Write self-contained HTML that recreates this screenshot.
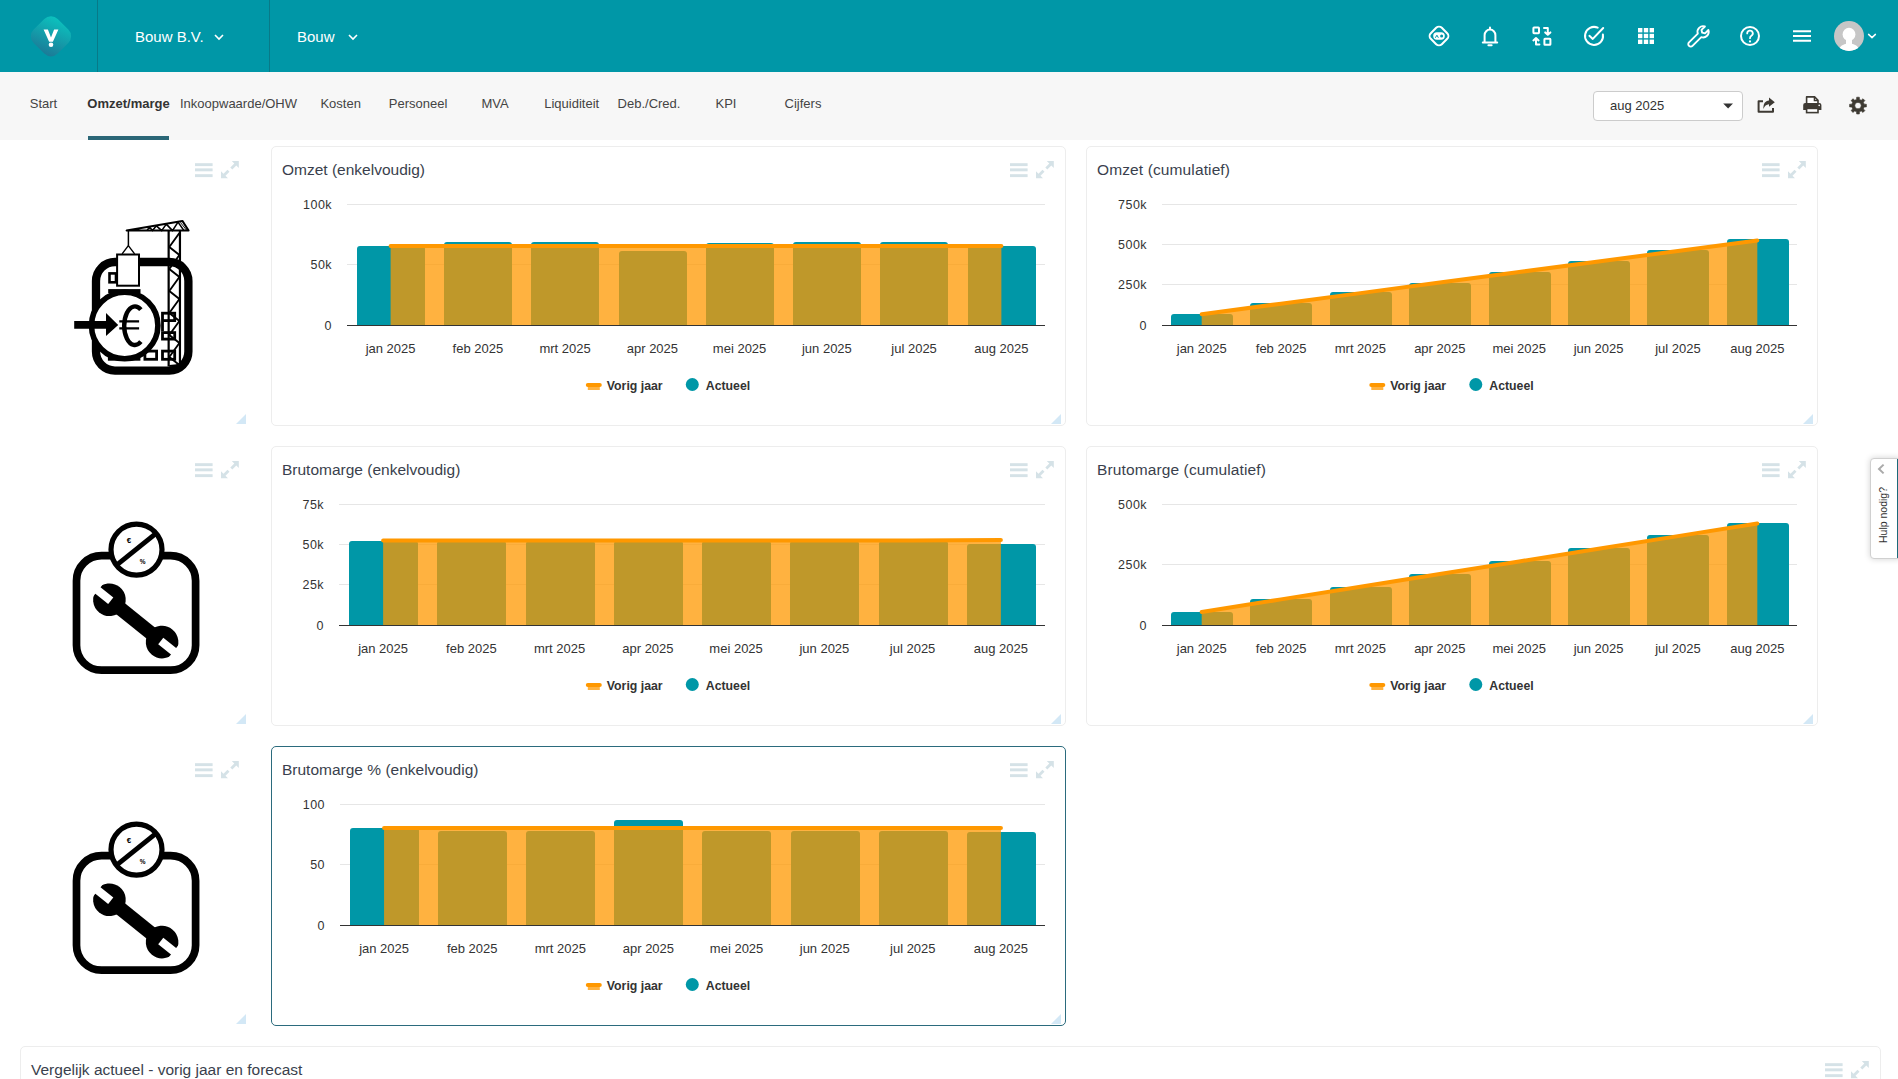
<!DOCTYPE html>
<html><head><meta charset="utf-8"><title>Dashboard</title>
<style>
html,body{margin:0;padding:0;overflow:hidden}
body{width:1898px;height:1079px;overflow:hidden;position:relative;background:#fff;font-family:"Liberation Sans", sans-serif;color:#333}
.abs{position:absolute}
.hdr{left:0;top:0;width:1898px;height:72px;background:#0097a7}
.nav{left:0;top:72px;width:1898px;height:68px;background:#f7f7f7}
.tab{position:absolute;top:96px;font-size:13px;line-height:15px;color:#444;white-space:nowrap;transform:translateX(-50%)}
.card{position:absolute;box-sizing:border-box;border:1px solid #ededed;border-radius:5px;background:#fff}
.title{position:absolute;font-size:15.5px;line-height:18px;color:#3a3f4d;white-space:nowrap}
svg text{font-family:"Liberation Sans", sans-serif}
.yl{font-size:12.5px;fill:#333;letter-spacing:0.45px}
.xl{font-size:13px;fill:#333}
.lg{font-size:12.3px;font-weight:bold;fill:#333}
.hw{position:absolute;color:#fff;font-size:15px;line-height:20px;white-space:nowrap}
#root{position:absolute;left:0;top:0;width:1898px;height:1079px;overflow:hidden}
</style></head><body><div id="root">

<div class="abs hdr"></div>
<div class="abs" style="left:97px;top:0;width:1px;height:72px;background:#087a88"></div>
<div class="abs" style="left:269px;top:0;width:1px;height:72px;background:#087a88"></div>
<svg class="abs" style="left:26px;top:11px" width="50" height="50" viewBox="0 0 50 50">
<defs><linearGradient id="lg1" x1="0.3" y1="0" x2="0.7" y2="1"><stop offset="0" stop-color="#0cc0bd"/><stop offset="1" stop-color="#1b7c98"/></linearGradient></defs>
<rect x="8" y="8.3" width="34" height="34" rx="9.5" fill="url(#lg1)" transform="rotate(45 25 25.3)"/>
<path d="M17.6,18.4 h4.3 l3.1,8 l3.1,-8 h4.3 l-5.5,12.4 h-3.8 z" fill="#fff"/>
<circle cx="25" cy="33.8" r="2.3" fill="#fff"/></svg>
<div class="hw" style="left:135px;top:27px">Bouw B.V.</div>
<svg class="abs" style="left:213px;top:32.5px" width="12" height="8"><path d="M2,2 L6,6 L10,2" fill="none" stroke="#fff" stroke-width="1.6"/></svg>
<div class="hw" style="left:297px;top:27px">Bouw</div>
<svg class="abs" style="left:347px;top:32.5px" width="12" height="8"><path d="M2,2 L6,6 L10,2" fill="none" stroke="#fff" stroke-width="1.6"/></svg>
<svg class="abs" style="left:1420px;top:16px" width="470" height="40" viewBox="1420 16 470 40" fill="none" stroke="#fff" stroke-width="2" stroke-linecap="round" stroke-linejoin="round">
<!-- robot diamond -->
<rect x="1431.2" y="28.2" width="15.6" height="15.6" rx="4" transform="rotate(45 1439 36)"/>
<rect x="1433.2" y="32.3" width="11.6" height="7.4" rx="3.7" fill="#fff" stroke="none"/>
<path d="M1435.6,37.4 l1.3,-2.2 l1.3,2.2" stroke="#0097a7" stroke-width="1"/>
<circle cx="1441.6" cy="36" r="1.5" fill="#0097a7" stroke="none"/>
<!-- bell -->
<path d="M1482.8,42.6 h14.4 M1484.6,42.4 V35.2 a5.4,5.6 0 0 1 10.8,0 V42.4 M1490,29.4 V27.6" />
<path d="M1488.4,45.2 h3.2" />
<!-- swap -->
<rect x="1533.4" y="27.6" width="5.6" height="5.6" rx="0.6"/>
<rect x="1544.4" y="38.8" width="6" height="6" rx="0.6"/>
<path d="M1544,28 h3.8 v6 M1545.2,32.4 l2.6,2.4 l2.6,-2.4"/>
<path d="M1539.4,44.4 h-3.4 v-6 M1533.4,40.4 l2.6,-2.4 l2.6,2.4"/>
<!-- check circle -->
<path d="M1602.9,34.4 a9,9 0 1 1 -5.2,-6.7"/>
<path d="M1589.4,35.8 l3.4,3.1 l10.4,-10.9"/>
<!-- grid -->
<g fill="#fff" stroke="none">
<rect x="1638" y="28" width="4.4" height="4.4"/><rect x="1643.8" y="28" width="4.4" height="4.4"/><rect x="1649.6" y="28" width="4.4" height="4.4"/>
<rect x="1638" y="33.8" width="4.4" height="4.4"/><rect x="1643.8" y="33.8" width="4.4" height="4.4"/><rect x="1649.6" y="33.8" width="4.4" height="4.4"/>
<rect x="1638" y="39.6" width="4.4" height="4.4"/><rect x="1643.8" y="39.6" width="4.4" height="4.4"/><rect x="1649.6" y="39.6" width="4.4" height="4.4"/>
</g>
<!-- wrench -->
<path d="M1689,42.4 l8.8,-8.8 a5.6,5.6 0 0 1 7.1,-7.1 l-3.4,3.4 l0.7,2.8 l2.8,0.7 l3.4,-3.4 a5.6,5.6 0 0 1 -7.1,7.1 l-8.8,8.8 a1.9,1.9 0 0 1 -3.5,-3.5 z" stroke-width="1.9"/>
<!-- help -->
<circle cx="1750" cy="36" r="9"/>
<path d="M1747.2,33.4 a2.8,2.8 0 1 1 4.2,2.4 c-1,0.6 -1.4,1.2 -1.4,2.4" stroke-width="1.8"/>
<circle cx="1750" cy="41.4" r="1.1" fill="#fff" stroke="none"/>
<!-- hamburger -->
<path d="M1793,31.2 h18 M1793,36 h18 M1793,40.8 h18" stroke-linecap="butt"/>
<!-- avatar -->
<defs><clipPath id="avc"><circle cx="1849" cy="36" r="15"/></clipPath></defs>
<circle cx="1849" cy="36" r="15" fill="#c6c6c6" stroke="none"/>
<g clip-path="url(#avc)" fill="#fff" stroke="none"><ellipse cx="1849" cy="34.4" rx="6.4" ry="6.6"/><rect x="1846" y="38" width="6" height="7"/><ellipse cx="1849" cy="50.4" rx="10.2" ry="6.8"/></g>
<path d="M1868.6,34.4 l3.4,3.2 l3.4,-3.2" stroke-width="1.5"/>
</svg>
<div class="abs nav"></div>
<div class="tab" style="left:43.5px;">Start</div>
<div class="tab" style="left:128.5px;font-weight:bold;color:#333;">Omzet/marge</div>
<div class="tab" style="left:238.5px;">Inkoopwaarde/OHW</div>
<div class="tab" style="left:340.7px;">Kosten</div>
<div class="tab" style="left:418px;">Personeel</div>
<div class="tab" style="left:495px;">MVA</div>
<div class="tab" style="left:571.7px;">Liquiditeit</div>
<div class="tab" style="left:649px;">Deb./Cred.</div>
<div class="tab" style="left:726px;">KPI</div>
<div class="tab" style="left:803px;">Cijfers</div>
<div class="abs" style="left:88px;top:136px;width:81px;height:4px;background:#2b6777"></div>
<div class="abs" style="left:1593px;top:91px;width:150px;height:30px;box-sizing:border-box;border:1px solid #ccc;border-radius:4px;background:#fff"></div>
<div class="abs" style="left:1610px;top:98px;font-size:13px;line-height:15px;color:#333">aug 2025</div>
<svg class="abs" style="left:1720px;top:100px" width="16" height="12"><path d="M3.2,3.5 h9.8 l-4.9,5 z" fill="#333"/></svg>
<svg class="abs" style="left:1750px;top:90px" width="125" height="30" viewBox="1750 90 125 30">
<!-- share -->
<path d="M1763,101.2 h-4.4 v10.5 h14.4 v-3.8" fill="none" stroke="#3e3a33" stroke-width="2" stroke-linejoin="round" stroke-linecap="butt"/>
<path d="M1774.8,102.2 L1769,97.6 V100.4 C1765.2,100.6 1763.2,103.6 1763.4,109 C1764.6,105.8 1766.2,104.4 1769,104.2 V106.8 Z" fill="#3e3a33"/>
<!-- print -->
<path d="M1806.6,103.6 V96.9 h8 l3.4,3.4 V103.6" fill="#fff" stroke="#3e3a33" stroke-width="1.6" stroke-linejoin="round"/>
<path d="M1814.4,96.9 v3.6 h3.6" fill="none" stroke="#3e3a33" stroke-width="1.4"/>
<path d="M1803.2,110 V105 a2,2 0 0 1 2,-2 h14.2 a2,2 0 0 1 2,2 V110 Z" fill="#3e3a33"/>
<rect x="1806.6" y="108.4" width="11.4" height="4.2" fill="#fff" stroke="#3e3a33" stroke-width="1.6"/>
<circle cx="1819.2" cy="105.4" r="0.8" fill="#fff"/>
<!-- gear -->
<path d="M1856.53,99.47 L1856.67,97.20 L1859.33,97.20 L1859.47,99.47 L1861.29,100.23 L1863.00,98.72 L1864.88,100.60 L1863.37,102.31 L1864.13,104.13 L1866.40,104.27 L1866.40,106.93 L1864.13,107.07 L1863.37,108.89 L1864.88,110.60 L1863.00,112.48 L1861.29,110.97 L1859.47,111.73 L1859.33,114.00 L1856.67,114.00 L1856.53,111.73 L1854.71,110.97 L1853.00,112.48 L1851.12,110.60 L1852.63,108.89 L1851.87,107.07 L1849.60,106.93 L1849.60,104.27 L1851.87,104.13 L1852.63,102.31 L1851.12,100.60 L1853.00,98.72 L1854.71,100.23 Z M1861.20,105.60 a3.2,3.2 0 1 0 -6.40,0 a3.2,3.2 0 1 0 6.40,0 Z" fill="#3e3a33" fill-rule="evenodd" stroke="#3e3a33" stroke-width="0.6" stroke-linejoin="round"/>
</svg>
<div class="card" style="left:271px;top:146px;width:795px;height:280px;"></div>
<div class="title" style="left:282px;top:161px;">Omzet (enkelvoudig)</div>
<svg class="abs" style="left:1009.3px;top:161px" width="46" height="20" viewBox="0 0 46 20">
<g fill="#d5e2e7"><rect x="1" y="2.2" width="17.6" height="2.9"/><rect x="1" y="7.4" width="17.6" height="2.9"/><rect x="1" y="13.2" width="17.6" height="2.9"/>
<path d="M44.8,0 V7 L42.3,4.5 L38.3,8.5 L36.3,6.5 L40.3,2.5 L37.8,0 Z"/>
<path d="M27,17.2 V10.2 L29.5,12.7 L33.5,8.7 L35.5,10.7 L31.5,14.7 L34,17.2 Z"/></g></svg>
<svg class="abs" style="left:1051px;top:414px" width="10" height="10"><path d="M10,0 V10 H0 Z" fill="#d3e8f6"/></svg>
<div class="card" style="left:1086px;top:146px;width:732px;height:280px;"></div>
<div class="title" style="left:1097px;top:161px;letter-spacing:0.12px;">Omzet (cumulatief)</div>
<svg class="abs" style="left:1761.3px;top:161px" width="46" height="20" viewBox="0 0 46 20">
<g fill="#d5e2e7"><rect x="1" y="2.2" width="17.6" height="2.9"/><rect x="1" y="7.4" width="17.6" height="2.9"/><rect x="1" y="13.2" width="17.6" height="2.9"/>
<path d="M44.8,0 V7 L42.3,4.5 L38.3,8.5 L36.3,6.5 L40.3,2.5 L37.8,0 Z"/>
<path d="M27,17.2 V10.2 L29.5,12.7 L33.5,8.7 L35.5,10.7 L31.5,14.7 L34,17.2 Z"/></g></svg>
<svg class="abs" style="left:1803px;top:414px" width="10" height="10"><path d="M10,0 V10 H0 Z" fill="#d3e8f6"/></svg>
<div class="card" style="left:271px;top:446px;width:795px;height:280px;"></div>
<div class="title" style="left:282px;top:461px;">Brutomarge (enkelvoudig)</div>
<svg class="abs" style="left:1009.3px;top:461px" width="46" height="20" viewBox="0 0 46 20">
<g fill="#d5e2e7"><rect x="1" y="2.2" width="17.6" height="2.9"/><rect x="1" y="7.4" width="17.6" height="2.9"/><rect x="1" y="13.2" width="17.6" height="2.9"/>
<path d="M44.8,0 V7 L42.3,4.5 L38.3,8.5 L36.3,6.5 L40.3,2.5 L37.8,0 Z"/>
<path d="M27,17.2 V10.2 L29.5,12.7 L33.5,8.7 L35.5,10.7 L31.5,14.7 L34,17.2 Z"/></g></svg>
<svg class="abs" style="left:1051px;top:714px" width="10" height="10"><path d="M10,0 V10 H0 Z" fill="#d3e8f6"/></svg>
<div class="card" style="left:1086px;top:446px;width:732px;height:280px;"></div>
<div class="title" style="left:1097px;top:461px;letter-spacing:0.12px;">Brutomarge (cumulatief)</div>
<svg class="abs" style="left:1761.3px;top:461px" width="46" height="20" viewBox="0 0 46 20">
<g fill="#d5e2e7"><rect x="1" y="2.2" width="17.6" height="2.9"/><rect x="1" y="7.4" width="17.6" height="2.9"/><rect x="1" y="13.2" width="17.6" height="2.9"/>
<path d="M44.8,0 V7 L42.3,4.5 L38.3,8.5 L36.3,6.5 L40.3,2.5 L37.8,0 Z"/>
<path d="M27,17.2 V10.2 L29.5,12.7 L33.5,8.7 L35.5,10.7 L31.5,14.7 L34,17.2 Z"/></g></svg>
<svg class="abs" style="left:1803px;top:714px" width="10" height="10"><path d="M10,0 V10 H0 Z" fill="#d3e8f6"/></svg>
<div class="card" style="left:271px;top:746px;width:795px;height:280px;border-color:#2b6b7d;"></div>
<div class="title" style="left:282px;top:761px;">Brutomarge % (enkelvoudig)</div>
<svg class="abs" style="left:1009.3px;top:761px" width="46" height="20" viewBox="0 0 46 20">
<g fill="#d5e2e7"><rect x="1" y="2.2" width="17.6" height="2.9"/><rect x="1" y="7.4" width="17.6" height="2.9"/><rect x="1" y="13.2" width="17.6" height="2.9"/>
<path d="M44.8,0 V7 L42.3,4.5 L38.3,8.5 L36.3,6.5 L40.3,2.5 L37.8,0 Z"/>
<path d="M27,17.2 V10.2 L29.5,12.7 L33.5,8.7 L35.5,10.7 L31.5,14.7 L34,17.2 Z"/></g></svg>
<svg class="abs" style="left:1051px;top:1014px" width="10" height="10"><path d="M10,0 V10 H0 Z" fill="#d3e8f6"/></svg>
<svg class="abs" style="left:194.3px;top:161px" width="46" height="20" viewBox="0 0 46 20">
<g fill="#d5e2e7"><rect x="1" y="2.2" width="17.6" height="2.9"/><rect x="1" y="7.4" width="17.6" height="2.9"/><rect x="1" y="13.2" width="17.6" height="2.9"/>
<path d="M44.8,0 V7 L42.3,4.5 L38.3,8.5 L36.3,6.5 L40.3,2.5 L37.8,0 Z"/>
<path d="M27,17.2 V10.2 L29.5,12.7 L33.5,8.7 L35.5,10.7 L31.5,14.7 L34,17.2 Z"/></g></svg>
<svg class="abs" style="left:235.5px;top:414px" width="10" height="10"><path d="M10,0 V10 H0 Z" fill="#d3e8f6"/></svg>
<svg class="abs" style="left:194.3px;top:461px" width="46" height="20" viewBox="0 0 46 20">
<g fill="#d5e2e7"><rect x="1" y="2.2" width="17.6" height="2.9"/><rect x="1" y="7.4" width="17.6" height="2.9"/><rect x="1" y="13.2" width="17.6" height="2.9"/>
<path d="M44.8,0 V7 L42.3,4.5 L38.3,8.5 L36.3,6.5 L40.3,2.5 L37.8,0 Z"/>
<path d="M27,17.2 V10.2 L29.5,12.7 L33.5,8.7 L35.5,10.7 L31.5,14.7 L34,17.2 Z"/></g></svg>
<svg class="abs" style="left:235.5px;top:714px" width="10" height="10"><path d="M10,0 V10 H0 Z" fill="#d3e8f6"/></svg>
<svg class="abs" style="left:194.3px;top:761px" width="46" height="20" viewBox="0 0 46 20">
<g fill="#d5e2e7"><rect x="1" y="2.2" width="17.6" height="2.9"/><rect x="1" y="7.4" width="17.6" height="2.9"/><rect x="1" y="13.2" width="17.6" height="2.9"/>
<path d="M44.8,0 V7 L42.3,4.5 L38.3,8.5 L36.3,6.5 L40.3,2.5 L37.8,0 Z"/>
<path d="M27,17.2 V10.2 L29.5,12.7 L33.5,8.7 L35.5,10.7 L31.5,14.7 L34,17.2 Z"/></g></svg>
<svg class="abs" style="left:235.5px;top:1014px" width="10" height="10"><path d="M10,0 V10 H0 Z" fill="#d3e8f6"/></svg>
<div class="card" style="left:20px;top:1046px;width:1861px;height:60px"></div>
<div class="title" style="left:31px;top:1061px">Vergelijk actueel - vorig jaar en forecast</div>
<svg class="abs" style="left:1824.4px;top:1061px" width="46" height="20" viewBox="0 0 46 20">
<g fill="#d5e2e7"><rect x="1" y="2.2" width="17.6" height="2.9"/><rect x="1" y="7.4" width="17.6" height="2.9"/><rect x="1" y="13.2" width="17.6" height="2.9"/>
<path d="M44.8,0 V7 L42.3,4.5 L38.3,8.5 L36.3,6.5 L40.3,2.5 L37.8,0 Z"/>
<path d="M27,17.2 V10.2 L29.5,12.7 L33.5,8.7 L35.5,10.7 L31.5,14.7 L34,17.2 Z"/></g></svg>
<svg class="abs" style="left:271px;top:146px" width="795" height="280" viewBox="0 0 795 280"><rect x="76" y="58" width="698" height="1" fill="#e6e6e6"/>
<rect x="76" y="118" width="698" height="1" fill="#e6e6e6"/>
<path d="M86,179 V103 a3,3 0 0 1 3,-3 H151 a3,3 0 0 1 3,3 V179 Z" fill="#0097a7"/>
<path d="M173,179 V99 a3,3 0 0 1 3,-3 H238 a3,3 0 0 1 3,3 V179 Z" fill="#0097a7"/>
<path d="M260,179 V99 a3,3 0 0 1 3,-3 H325 a3,3 0 0 1 3,3 V179 Z" fill="#0097a7"/>
<path d="M348,179 V108 a3,3 0 0 1 3,-3 H413 a3,3 0 0 1 3,3 V179 Z" fill="#0097a7"/>
<path d="M435,179 V100 a3,3 0 0 1 3,-3 H500 a3,3 0 0 1 3,3 V179 Z" fill="#0097a7"/>
<path d="M522,179 V99 a3,3 0 0 1 3,-3 H587 a3,3 0 0 1 3,3 V179 Z" fill="#0097a7"/>
<path d="M609,179 V99 a3,3 0 0 1 3,-3 H674 a3,3 0 0 1 3,3 V179 Z" fill="#0097a7"/>
<path d="M697,179 V103 a3,3 0 0 1 3,-3 H762 a3,3 0 0 1 3,3 V179 Z" fill="#0097a7"/>
<path d="M119.62,100.00 L206.88,100.00 L294.12,100.00 L381.38,100.00 L468.62,100.00 L555.88,100.00 L643.12,100.00 L730.38,100.00 L730.38,179 L119.62,179 Z" fill="#ff9800" fill-opacity="0.75"/>
<path d="M119.62,100.00 L206.88,100.00 L294.12,100.00 L381.38,100.00 L468.62,100.00 L555.88,100.00 L643.12,100.00 L730.38,100.00" fill="none" stroke="#ff9800" stroke-width="4" stroke-linecap="round" stroke-linejoin="round"/>
<rect x="76" y="179" width="698" height="1" fill="#333"/>
<text x="61" y="62.5" text-anchor="end" class="yl">100k</text>
<text x="61" y="122.5" text-anchor="end" class="yl">50k</text>
<text x="61" y="184.2" text-anchor="end" class="yl">0</text>
<text x="119.6" y="207" text-anchor="middle" class="xl">jan 2025</text>
<text x="206.9" y="207" text-anchor="middle" class="xl">feb 2025</text>
<text x="294.1" y="207" text-anchor="middle" class="xl">mrt 2025</text>
<text x="381.4" y="207" text-anchor="middle" class="xl">apr 2025</text>
<text x="468.6" y="207" text-anchor="middle" class="xl">mei 2025</text>
<text x="555.9" y="207" text-anchor="middle" class="xl">jun 2025</text>
<text x="643.1" y="207" text-anchor="middle" class="xl">jul 2025</text>
<text x="730.4" y="207" text-anchor="middle" class="xl">aug 2025</text>
<rect x="316.8" y="240" width="12" height="4" fill="#ff9800" fill-opacity="0.75"/>
<path d="M316.8,239 h12" stroke="#ff9800" stroke-width="4" stroke-linecap="round"/>
<text x="335.8" y="243.5" class="lg">Vorig jaar</text>
<circle cx="421.3" cy="238.5" r="6.5" fill="#0097a7"/>
<text x="434.8" y="243.5" class="lg">Actueel</text></svg>
<svg class="abs" style="left:1086px;top:146px" width="732" height="280" viewBox="0 0 732 280"><rect x="76" y="58" width="635" height="1" fill="#e6e6e6"/>
<rect x="76" y="98" width="635" height="1" fill="#e6e6e6"/>
<rect x="76" y="138" width="635" height="1" fill="#e6e6e6"/>
<path d="M85,179 V171 a3,3 0 0 1 3,-3 H144 a3,3 0 0 1 3,3 V179 Z" fill="#0097a7"/>
<path d="M164,179 V160 a3,3 0 0 1 3,-3 H223 a3,3 0 0 1 3,3 V179 Z" fill="#0097a7"/>
<path d="M244,179 V149 a3,3 0 0 1 3,-3 H303 a3,3 0 0 1 3,3 V179 Z" fill="#0097a7"/>
<path d="M323,179 V140 a3,3 0 0 1 3,-3 H382 a3,3 0 0 1 3,3 V179 Z" fill="#0097a7"/>
<path d="M403,179 V129 a3,3 0 0 1 3,-3 H462 a3,3 0 0 1 3,3 V179 Z" fill="#0097a7"/>
<path d="M482,179 V118 a3,3 0 0 1 3,-3 H541 a3,3 0 0 1 3,3 V179 Z" fill="#0097a7"/>
<path d="M561,179 V107 a3,3 0 0 1 3,-3 H620 a3,3 0 0 1 3,3 V179 Z" fill="#0097a7"/>
<path d="M641,179 V96 a3,3 0 0 1 3,-3 H700 a3,3 0 0 1 3,3 V179 Z" fill="#0097a7"/>
<path d="M115.69,168.20 L195.06,157.66 L274.44,147.11 L353.81,136.57 L433.19,126.03 L512.56,115.49 L591.94,104.94 L671.31,94.40 L671.31,179 L115.69,179 Z" fill="#ff9800" fill-opacity="0.75"/>
<path d="M115.69,168.20 L195.06,157.66 L274.44,147.11 L353.81,136.57 L433.19,126.03 L512.56,115.49 L591.94,104.94 L671.31,94.40" fill="none" stroke="#ff9800" stroke-width="4" stroke-linecap="round" stroke-linejoin="round"/>
<rect x="76" y="179" width="635" height="1" fill="#333"/>
<text x="61" y="62.5" text-anchor="end" class="yl">750k</text>
<text x="61" y="102.5" text-anchor="end" class="yl">500k</text>
<text x="61" y="142.5" text-anchor="end" class="yl">250k</text>
<text x="61" y="184.2" text-anchor="end" class="yl">0</text>
<text x="115.7" y="207" text-anchor="middle" class="xl">jan 2025</text>
<text x="195.1" y="207" text-anchor="middle" class="xl">feb 2025</text>
<text x="274.4" y="207" text-anchor="middle" class="xl">mrt 2025</text>
<text x="353.8" y="207" text-anchor="middle" class="xl">apr 2025</text>
<text x="433.2" y="207" text-anchor="middle" class="xl">mei 2025</text>
<text x="512.6" y="207" text-anchor="middle" class="xl">jun 2025</text>
<text x="591.9" y="207" text-anchor="middle" class="xl">jul 2025</text>
<text x="671.3" y="207" text-anchor="middle" class="xl">aug 2025</text>
<rect x="285.3" y="240" width="12" height="4" fill="#ff9800" fill-opacity="0.75"/>
<path d="M285.3,239 h12" stroke="#ff9800" stroke-width="4" stroke-linecap="round"/>
<text x="304.3" y="243.5" class="lg">Vorig jaar</text>
<circle cx="389.8" cy="238.5" r="6.5" fill="#0097a7"/>
<text x="403.3" y="243.5" class="lg">Actueel</text></svg>
<svg class="abs" style="left:271px;top:446px" width="795" height="280" viewBox="0 0 795 280"><rect x="68" y="58" width="706" height="1" fill="#e6e6e6"/>
<rect x="68" y="98" width="706" height="1" fill="#e6e6e6"/>
<rect x="68" y="138" width="706" height="1" fill="#e6e6e6"/>
<path d="M78,179 V98 a3,3 0 0 1 3,-3 H144 a3,3 0 0 1 3,3 V179 Z" fill="#0097a7"/>
<path d="M166,179 V98 a3,3 0 0 1 3,-3 H232 a3,3 0 0 1 3,3 V179 Z" fill="#0097a7"/>
<path d="M255,179 V98 a3,3 0 0 1 3,-3 H321 a3,3 0 0 1 3,3 V179 Z" fill="#0097a7"/>
<path d="M343,179 V98 a3,3 0 0 1 3,-3 H409 a3,3 0 0 1 3,3 V179 Z" fill="#0097a7"/>
<path d="M431,179 V98 a3,3 0 0 1 3,-3 H497 a3,3 0 0 1 3,3 V179 Z" fill="#0097a7"/>
<path d="M519,179 V98 a3,3 0 0 1 3,-3 H585 a3,3 0 0 1 3,3 V179 Z" fill="#0097a7"/>
<path d="M608,179 V98 a3,3 0 0 1 3,-3 H674 a3,3 0 0 1 3,3 V179 Z" fill="#0097a7"/>
<path d="M696,179 V101 a3,3 0 0 1 3,-3 H762 a3,3 0 0 1 3,3 V179 Z" fill="#0097a7"/>
<path d="M112.12,94.40 L200.38,94.40 L288.62,94.40 L376.88,94.40 L465.12,94.40 L553.38,94.40 L641.62,94.40 L729.88,94.00 L729.88,179 L112.12,179 Z" fill="#ff9800" fill-opacity="0.75"/>
<path d="M112.12,94.40 L200.38,94.40 L288.62,94.40 L376.88,94.40 L465.12,94.40 L553.38,94.40 L641.62,94.40 L729.88,94.00" fill="none" stroke="#ff9800" stroke-width="4" stroke-linecap="round" stroke-linejoin="round"/>
<rect x="68" y="179" width="706" height="1" fill="#333"/>
<text x="53" y="62.5" text-anchor="end" class="yl">75k</text>
<text x="53" y="102.5" text-anchor="end" class="yl">50k</text>
<text x="53" y="142.5" text-anchor="end" class="yl">25k</text>
<text x="53" y="184.20000000000005" text-anchor="end" class="yl">0</text>
<text x="112.1" y="207" text-anchor="middle" class="xl">jan 2025</text>
<text x="200.4" y="207" text-anchor="middle" class="xl">feb 2025</text>
<text x="288.6" y="207" text-anchor="middle" class="xl">mrt 2025</text>
<text x="376.9" y="207" text-anchor="middle" class="xl">apr 2025</text>
<text x="465.1" y="207" text-anchor="middle" class="xl">mei 2025</text>
<text x="553.4" y="207" text-anchor="middle" class="xl">jun 2025</text>
<text x="641.6" y="207" text-anchor="middle" class="xl">jul 2025</text>
<text x="729.9" y="207" text-anchor="middle" class="xl">aug 2025</text>
<rect x="316.8" y="240" width="12" height="4" fill="#ff9800" fill-opacity="0.75"/>
<path d="M316.8,239 h12" stroke="#ff9800" stroke-width="4" stroke-linecap="round"/>
<text x="335.8" y="243.5" class="lg">Vorig jaar</text>
<circle cx="421.3" cy="238.5" r="6.5" fill="#0097a7"/>
<text x="434.8" y="243.5" class="lg">Actueel</text></svg>
<svg class="abs" style="left:1086px;top:446px" width="732" height="280" viewBox="0 0 732 280"><rect x="76" y="58" width="635" height="1" fill="#e6e6e6"/>
<rect x="76" y="118" width="635" height="1" fill="#e6e6e6"/>
<path d="M85,179 V169 a3,3 0 0 1 3,-3 H144 a3,3 0 0 1 3,3 V179 Z" fill="#0097a7"/>
<path d="M164,179 V156 a3,3 0 0 1 3,-3 H223 a3,3 0 0 1 3,3 V179 Z" fill="#0097a7"/>
<path d="M244,179 V144 a3,3 0 0 1 3,-3 H303 a3,3 0 0 1 3,3 V179 Z" fill="#0097a7"/>
<path d="M323,179 V131 a3,3 0 0 1 3,-3 H382 a3,3 0 0 1 3,3 V179 Z" fill="#0097a7"/>
<path d="M403,179 V118 a3,3 0 0 1 3,-3 H462 a3,3 0 0 1 3,3 V179 Z" fill="#0097a7"/>
<path d="M482,179 V105 a3,3 0 0 1 3,-3 H541 a3,3 0 0 1 3,3 V179 Z" fill="#0097a7"/>
<path d="M561,179 V92 a3,3 0 0 1 3,-3 H620 a3,3 0 0 1 3,3 V179 Z" fill="#0097a7"/>
<path d="M641,179 V80 a3,3 0 0 1 3,-3 H700 a3,3 0 0 1 3,3 V179 Z" fill="#0097a7"/>
<path d="M115.69,166.00 L195.06,153.36 L274.44,140.71 L353.81,128.07 L433.19,115.43 L512.56,102.79 L591.94,90.14 L671.31,77.50 L671.31,179 L115.69,179 Z" fill="#ff9800" fill-opacity="0.75"/>
<path d="M115.69,166.00 L195.06,153.36 L274.44,140.71 L353.81,128.07 L433.19,115.43 L512.56,102.79 L591.94,90.14 L671.31,77.50" fill="none" stroke="#ff9800" stroke-width="4" stroke-linecap="round" stroke-linejoin="round"/>
<rect x="76" y="179" width="635" height="1" fill="#333"/>
<text x="61" y="62.5" text-anchor="end" class="yl">500k</text>
<text x="61" y="122.5" text-anchor="end" class="yl">250k</text>
<text x="61" y="184.20000000000005" text-anchor="end" class="yl">0</text>
<text x="115.7" y="207" text-anchor="middle" class="xl">jan 2025</text>
<text x="195.1" y="207" text-anchor="middle" class="xl">feb 2025</text>
<text x="274.4" y="207" text-anchor="middle" class="xl">mrt 2025</text>
<text x="353.8" y="207" text-anchor="middle" class="xl">apr 2025</text>
<text x="433.2" y="207" text-anchor="middle" class="xl">mei 2025</text>
<text x="512.6" y="207" text-anchor="middle" class="xl">jun 2025</text>
<text x="591.9" y="207" text-anchor="middle" class="xl">jul 2025</text>
<text x="671.3" y="207" text-anchor="middle" class="xl">aug 2025</text>
<rect x="285.3" y="240" width="12" height="4" fill="#ff9800" fill-opacity="0.75"/>
<path d="M285.3,239 h12" stroke="#ff9800" stroke-width="4" stroke-linecap="round"/>
<text x="304.3" y="243.5" class="lg">Vorig jaar</text>
<circle cx="389.8" cy="238.5" r="6.5" fill="#0097a7"/>
<text x="403.3" y="243.5" class="lg">Actueel</text></svg>
<svg class="abs" style="left:271px;top:746px" width="795" height="280" viewBox="0 0 795 280"><rect x="69" y="58" width="705" height="1" fill="#e6e6e6"/>
<rect x="69" y="118" width="705" height="1" fill="#e6e6e6"/>
<path d="M79,179 V85 a3,3 0 0 1 3,-3 H145 a3,3 0 0 1 3,3 V179 Z" fill="#0097a7"/>
<path d="M167,179 V88 a3,3 0 0 1 3,-3 H233 a3,3 0 0 1 3,3 V179 Z" fill="#0097a7"/>
<path d="M255,179 V88 a3,3 0 0 1 3,-3 H321 a3,3 0 0 1 3,3 V179 Z" fill="#0097a7"/>
<path d="M343,179 V77 a3,3 0 0 1 3,-3 H409 a3,3 0 0 1 3,3 V179 Z" fill="#0097a7"/>
<path d="M431,179 V88 a3,3 0 0 1 3,-3 H497 a3,3 0 0 1 3,3 V179 Z" fill="#0097a7"/>
<path d="M520,179 V88 a3,3 0 0 1 3,-3 H586 a3,3 0 0 1 3,3 V179 Z" fill="#0097a7"/>
<path d="M608,179 V88 a3,3 0 0 1 3,-3 H674 a3,3 0 0 1 3,3 V179 Z" fill="#0097a7"/>
<path d="M696,179 V89 a3,3 0 0 1 3,-3 H762 a3,3 0 0 1 3,3 V179 Z" fill="#0097a7"/>
<path d="M113.06,82.00 L201.19,82.00 L289.31,82.00 L377.44,82.00 L465.56,82.00 L553.69,82.00 L641.81,82.00 L729.94,82.00 L729.94,179 L113.06,179 Z" fill="#ff9800" fill-opacity="0.75"/>
<path d="M113.06,82.00 L201.19,82.00 L289.31,82.00 L377.44,82.00 L465.56,82.00 L553.69,82.00 L641.81,82.00 L729.94,82.00" fill="none" stroke="#ff9800" stroke-width="4" stroke-linecap="round" stroke-linejoin="round"/>
<rect x="69" y="179" width="705" height="1" fill="#333"/>
<text x="54" y="62.5" text-anchor="end" class="yl">100</text>
<text x="54" y="122.5" text-anchor="end" class="yl">50</text>
<text x="54" y="184.20000000000005" text-anchor="end" class="yl">0</text>
<text x="113.1" y="207" text-anchor="middle" class="xl">jan 2025</text>
<text x="201.2" y="207" text-anchor="middle" class="xl">feb 2025</text>
<text x="289.3" y="207" text-anchor="middle" class="xl">mrt 2025</text>
<text x="377.4" y="207" text-anchor="middle" class="xl">apr 2025</text>
<text x="465.6" y="207" text-anchor="middle" class="xl">mei 2025</text>
<text x="553.7" y="207" text-anchor="middle" class="xl">jun 2025</text>
<text x="641.8" y="207" text-anchor="middle" class="xl">jul 2025</text>
<text x="729.9" y="207" text-anchor="middle" class="xl">aug 2025</text>
<rect x="316.8" y="240" width="12" height="4" fill="#ff9800" fill-opacity="0.75"/>
<path d="M316.8,239 h12" stroke="#ff9800" stroke-width="4" stroke-linecap="round"/>
<text x="335.8" y="243.5" class="lg">Vorig jaar</text>
<circle cx="421.3" cy="238.5" r="6.5" fill="#0097a7"/>
<text x="434.8" y="243.5" class="lg">Actueel</text></svg>
<svg class="abs" style="left:60px;top:210px" width="160" height="180" viewBox="60 210 160 180" fill="none" stroke="#000" stroke-linejoin="miter">
<rect x="96" y="262" width="92.4" height="108.6" rx="19" ry="19" stroke-width="8.3"/>
<rect x="108.2" y="289.1" width="32.3" height="4" fill="#000" stroke="none"/>
<rect x="107.9" y="355.9" width="32.5" height="4.8" fill="#000" stroke="none"/>
<rect x="162.5" y="313.2" width="12.2" height="7.4" stroke-width="2.8"/>
<rect x="162.5" y="332.59999999999997" width="12.2" height="6.5" stroke-width="2.8"/>
<rect x="162.5" y="351.09999999999997" width="12.2" height="8.2" stroke-width="2.8"/>
<rect x="144.9" y="351.09999999999997" width="11.7" height="8.2" stroke-width="2.8"/>
<rect x="161.1" y="322" width="2.8" height="9.2" fill="#000" stroke="none"/>
<rect x="109.5" y="273.4" width="6.5" height="8.9" stroke-width="2.6"/>
<path d="M168.65,231 V366.5 M179.95,231 V366" stroke-width="2.2"/>
<path d="M179.4,233.0 L169.3,247.0 L179.4,255.0 L169.3,269.0 L179.4,277.0 L169.3,291.0 L179.4,299.0 L169.3,313.0 L179.4,321.0 L169.3,335.0 L179.4,343.0 L169.3,357.0 L179.4,365.0 L169.3,366" stroke-width="1.9"/>
<path d="M126.6,230.6 H188.6 L182.4,220.9 Z" stroke-width="2" stroke-linejoin="round"/>
<path d="M147.0,230.6 L149.4,227.0 L152.5,230.6 L156.4,225.8 L161.7,230.6 L166.3,224.1 L172.5,230.6 L178.0,222.1 L184.0,230.6" stroke-width="1.6" stroke-linejoin="round"/>
<path d="M180.4,222.4 L186.4,230" stroke-width="0.9"/>
<path d="M128.4,231 V245.6" stroke-width="1.5"/><path d="M122.1,253.8 L128.35,245.6 L134.6,253.8" stroke-width="1.4"/>
<rect x="117.1" y="254.5" width="21.9" height="31.2" fill="#fff" stroke-width="2"/>
<circle cx="124.7" cy="325.5" r="33.2" fill="#fff" stroke-width="5.6"/>
<path d="M74.2,320.9 H106 V313 L118.2,324.9 L106,336 V328.8 H74.2 Z" fill="#000" stroke="none"/>
<path d="M140.88,309.70 A10.7,19.3 0 1 0 140.88,341.70" stroke-width="4.4"/>
<path d="M119.3,321.3 H139.1 M119.3,328.4 H139.1" stroke-width="2.2"/>
</svg>
<svg class="abs" style="left:60px;top:510px" width="160" height="180" viewBox="60 510 160 180" fill="none" stroke="#000">
<rect x="76.5" y="555.7" width="119.1" height="114.5" rx="25" ry="25" stroke-width="7.7"/>
<circle cx="136.5" cy="549.6" r="25.5" fill="#fff" stroke-width="5.2"/>
<path d="M117.8,564.2 L154.8,534.4" stroke-width="4.9"/>
<text x="128.9" y="543" font-size="8" font-weight="bold" fill="#000" stroke="none" text-anchor="middle">€</text>
<text x="142.6" y="563.8" font-size="6.5" font-weight="bold" fill="#000" stroke="none" text-anchor="middle">%</text>
<g transform="translate(135.75,620.9) rotate(38.8)" stroke="none"><circle cx="-33.8" cy="0" r="16.3" fill="#000"/><circle cx="33.8" cy="0" r="16.3" fill="#000"/><rect x="-33.8" y="-6.95" width="67.6" height="13.9" fill="#000"/><rect x="-52.099999999999994" y="-4.1" width="20.0" height="8.2" fill="#fff"/><rect x="32.099999999999994" y="-4.1" width="20.0" height="8.2" fill="#fff"/><rect x="-51.099999999999994" y="-16.3" width="2.6" height="32.6" fill="#fff"/><rect x="48.49999999999999" y="-16.3" width="3" height="32.6" fill="#fff"/></g>
</svg>
<svg class="abs" style="left:60px;top:810px" width="160" height="180" viewBox="60 510 160 180" fill="none" stroke="#000">
<rect x="76.5" y="555.7" width="119.1" height="114.5" rx="25" ry="25" stroke-width="7.7"/>
<circle cx="136.5" cy="549.6" r="25.5" fill="#fff" stroke-width="5.2"/>
<path d="M117.8,564.2 L154.8,534.4" stroke-width="4.9"/>
<text x="128.9" y="543" font-size="8" font-weight="bold" fill="#000" stroke="none" text-anchor="middle">€</text>
<text x="142.6" y="563.8" font-size="6.5" font-weight="bold" fill="#000" stroke="none" text-anchor="middle">%</text>
<g transform="translate(135.75,620.9) rotate(38.8)" stroke="none"><circle cx="-33.8" cy="0" r="16.3" fill="#000"/><circle cx="33.8" cy="0" r="16.3" fill="#000"/><rect x="-33.8" y="-6.95" width="67.6" height="13.9" fill="#000"/><rect x="-52.099999999999994" y="-4.1" width="20.0" height="8.2" fill="#fff"/><rect x="32.099999999999994" y="-4.1" width="20.0" height="8.2" fill="#fff"/><rect x="-51.099999999999994" y="-16.3" width="2.6" height="32.6" fill="#fff"/><rect x="48.49999999999999" y="-16.3" width="3" height="32.6" fill="#fff"/></g>
</svg>
<div class="abs" style="left:1870px;top:458px;width:31px;height:101px;box-sizing:border-box;border:1px solid #d0d0d0;border-radius:4px 0 0 4px;background:#fff;box-shadow:0 0 6px rgba(0,0,0,0.18)"></div>
<div class="abs" style="left:1896.6px;top:459px;width:2px;height:99px;background:#1c6a7a"></div>
<svg class="abs" style="left:1873.6px;top:462.4px" width="14" height="14"><path d="M9.6,2.6 L5,7 L9.6,11.4" fill="none" stroke="#aaa" stroke-width="2"/></svg>
<div class="abs" style="left:1882.6px;top:514.5px;width:0;height:0"><div style="position:absolute;white-space:nowrap;font-size:10.5px;line-height:12px;color:#333;transform:translate(-50%,-50%) rotate(-90deg)">Hulp nodig?</div></div>
</div></body></html>
